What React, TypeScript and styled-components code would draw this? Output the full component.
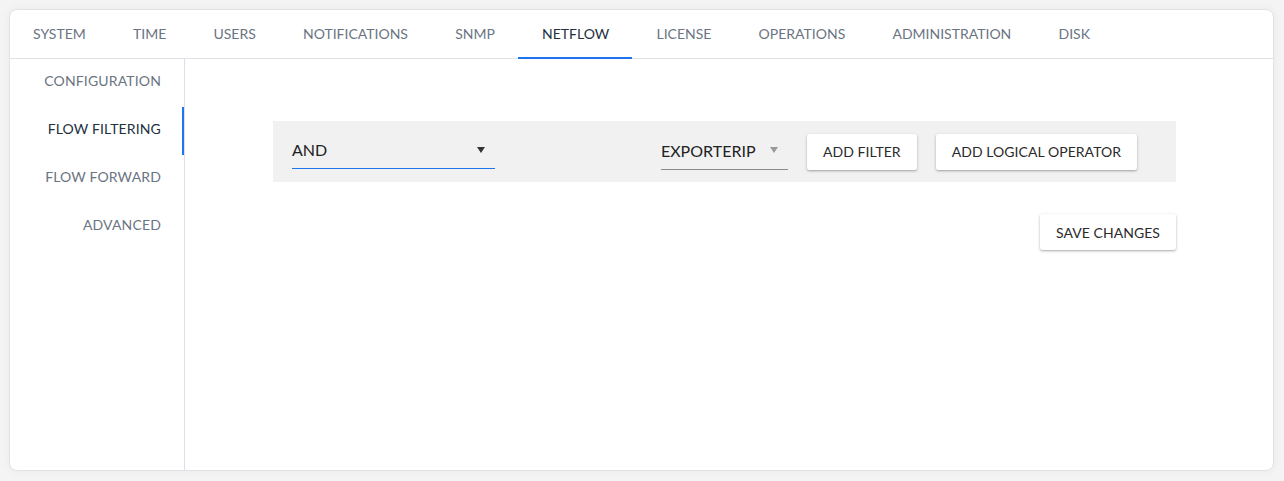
import React from "react";
import styled, { createGlobalStyle } from "styled-components";

const GlobalStyle = createGlobalStyle`
  html, body { margin: 0; padding: 0; }
  body {
    background: #f4f4f5;
    font-family: Lato, "Open Sans", "Liberation Sans", sans-serif;
    -webkit-font-smoothing: antialiased;
  }
  * { box-sizing: border-box; }
`;

const Page = styled.div`
  padding: 9px 10px 10px 9px;
`;

const Card = styled.div`
  height: 462px;
  background: #fff;
  border: 1px solid #dfe3e8;
  border-radius: 8px;
  box-shadow: 0 0 10px rgba(0, 0, 0, 0.05);
  display: flex;
  flex-direction: column;
  overflow: hidden;
`;

const TabBar = styled.div`
  display: flex;
  height: 49px;
  margin-left: -1px;
  border-bottom: 1px solid #dfe2e6;
  flex-shrink: 0;
`;

const Tab = styled.div<{ $active?: boolean }>`
  height: 49px;
  margin-bottom: -1px;
  padding: 0 23.2px 2px 24px;
  display: flex;
  align-items: center;
  font-size: 14px;
  color: ${(p) => (p.$active ? "#22303f" : "#6a7482")};
  box-shadow: ${(p) => (p.$active ? "inset 0 -2px 0 #1f74f0" : "none")};
  white-space: nowrap;
`;

const Body = styled.div`
  flex: 1;
  display: flex;
  min-height: 0;
`;

const Sidebar = styled.div`
  width: 175px;
  flex-shrink: 0;
  border-right: 1px solid #dcdfe3;
  display: flex;
  flex-direction: column;
`;

const SideItem = styled.div<{ $active?: boolean }>`
  height: 48px;
  display: flex;
  align-items: center;
  justify-content: flex-end;
  padding: 0 23px 5px 0;
  font-size: 14px;
  letter-spacing: 0.15px;
  color: ${(p) => (p.$active ? "#22303f" : "#6a7482")};
  box-shadow: ${(p) => (p.$active ? "inset -2px 0 0 #1f74f0" : "none")};
  white-space: nowrap;
`;

const Content = styled.div`
  flex: 1;
  padding: 62px 97px 0 88px;
  display: flex;
  flex-direction: column;
`;

const FilterBox = styled.div`
  height: 61px;
  background: #f1f1f1;
  display: flex;
  align-items: center;
`;

const LeftCell = styled.div`
  width: 370px;
  padding-left: 19px;
  display: flex;
  align-items: center;
`;

const RightCell = styled.div`
  flex: 1;
  padding-left: 18px;
  display: flex;
  align-items: center;
  gap: 19px;
`;

const Select = styled.div<{ $width: number; $focused?: boolean }>`
  width: ${(p) => p.$width}px;
  height: ${(p) => (p.$focused ? 36 : 37)}px;
  margin-bottom: ${(p) => (p.$focused ? 1 : 0)}px;
  border-bottom: 1px solid ${(p) => (p.$focused ? "#1f74f0" : "#8a8a8a")};
  display: flex;
  align-items: center;
  justify-content: space-between;
  padding: 0 10px 2px 0;
  font-size: 16px;
  color: #222;
`;

const Arrow = styled.span<{ $muted?: boolean }>`
  width: 0;
  height: 0;
  border-left: 4px solid transparent;
  border-right: 4px solid transparent;
  border-top: 6px solid ${(p) => (p.$muted ? "#9a9a9a" : "#333")};
`;

const Button = styled.button`
  height: 36px;
  padding: 0 16px;
  border: none;
  border-radius: 2px;
  background: #fff;
  box-shadow: 0 1px 3px rgba(0, 0, 0, 0.28), 0 1px 1px rgba(0, 0, 0, 0.08);
  font-family: inherit;
  font-size: 14px;
  letter-spacing: 0.05px;
  color: #2a2a2a;
  white-space: nowrap;
  cursor: pointer;
`;

const SaveRow = styled.div`
  display: flex;
  justify-content: flex-end;
  margin-top: 32px;
`;

const tabs = [
  "SYSTEM",
  "TIME",
  "USERS",
  "NOTIFICATIONS",
  "SNMP",
  "NETFLOW",
  "LICENSE",
  "OPERATIONS",
  "ADMINISTRATION",
  "DISK",
];

const sideItems = ["CONFIGURATION", "FLOW FILTERING", "FLOW FORWARD", "ADVANCED"];

export default function App() {
  return (
    <>
      <GlobalStyle />
      <Page>
        <Card>
          <TabBar>
            {tabs.map((t) => (
              <Tab key={t} $active={t === "NETFLOW"}>
                {t}
              </Tab>
            ))}
          </TabBar>
          <Body>
            <Sidebar>
              {sideItems.map((s) => (
                <SideItem key={s} $active={s === "FLOW FILTERING"}>
                  {s}
                </SideItem>
              ))}
            </Sidebar>
            <Content>
              <FilterBox>
                <LeftCell>
                  <Select $width={203} $focused>
                    <span>AND</span>
                    <Arrow />
                  </Select>
                </LeftCell>
                <RightCell>
                  <Select $width={127}>
                    <span>EXPORTERIP</span>
                    <Arrow $muted />
                  </Select>
                  <Button>ADD FILTER</Button>
                  <Button>ADD LOGICAL OPERATOR</Button>
                </RightCell>
              </FilterBox>
              <SaveRow>
                <Button>SAVE CHANGES</Button>
              </SaveRow>
            </Content>
          </Body>
        </Card>
      </Page>
    </>
  );
}
